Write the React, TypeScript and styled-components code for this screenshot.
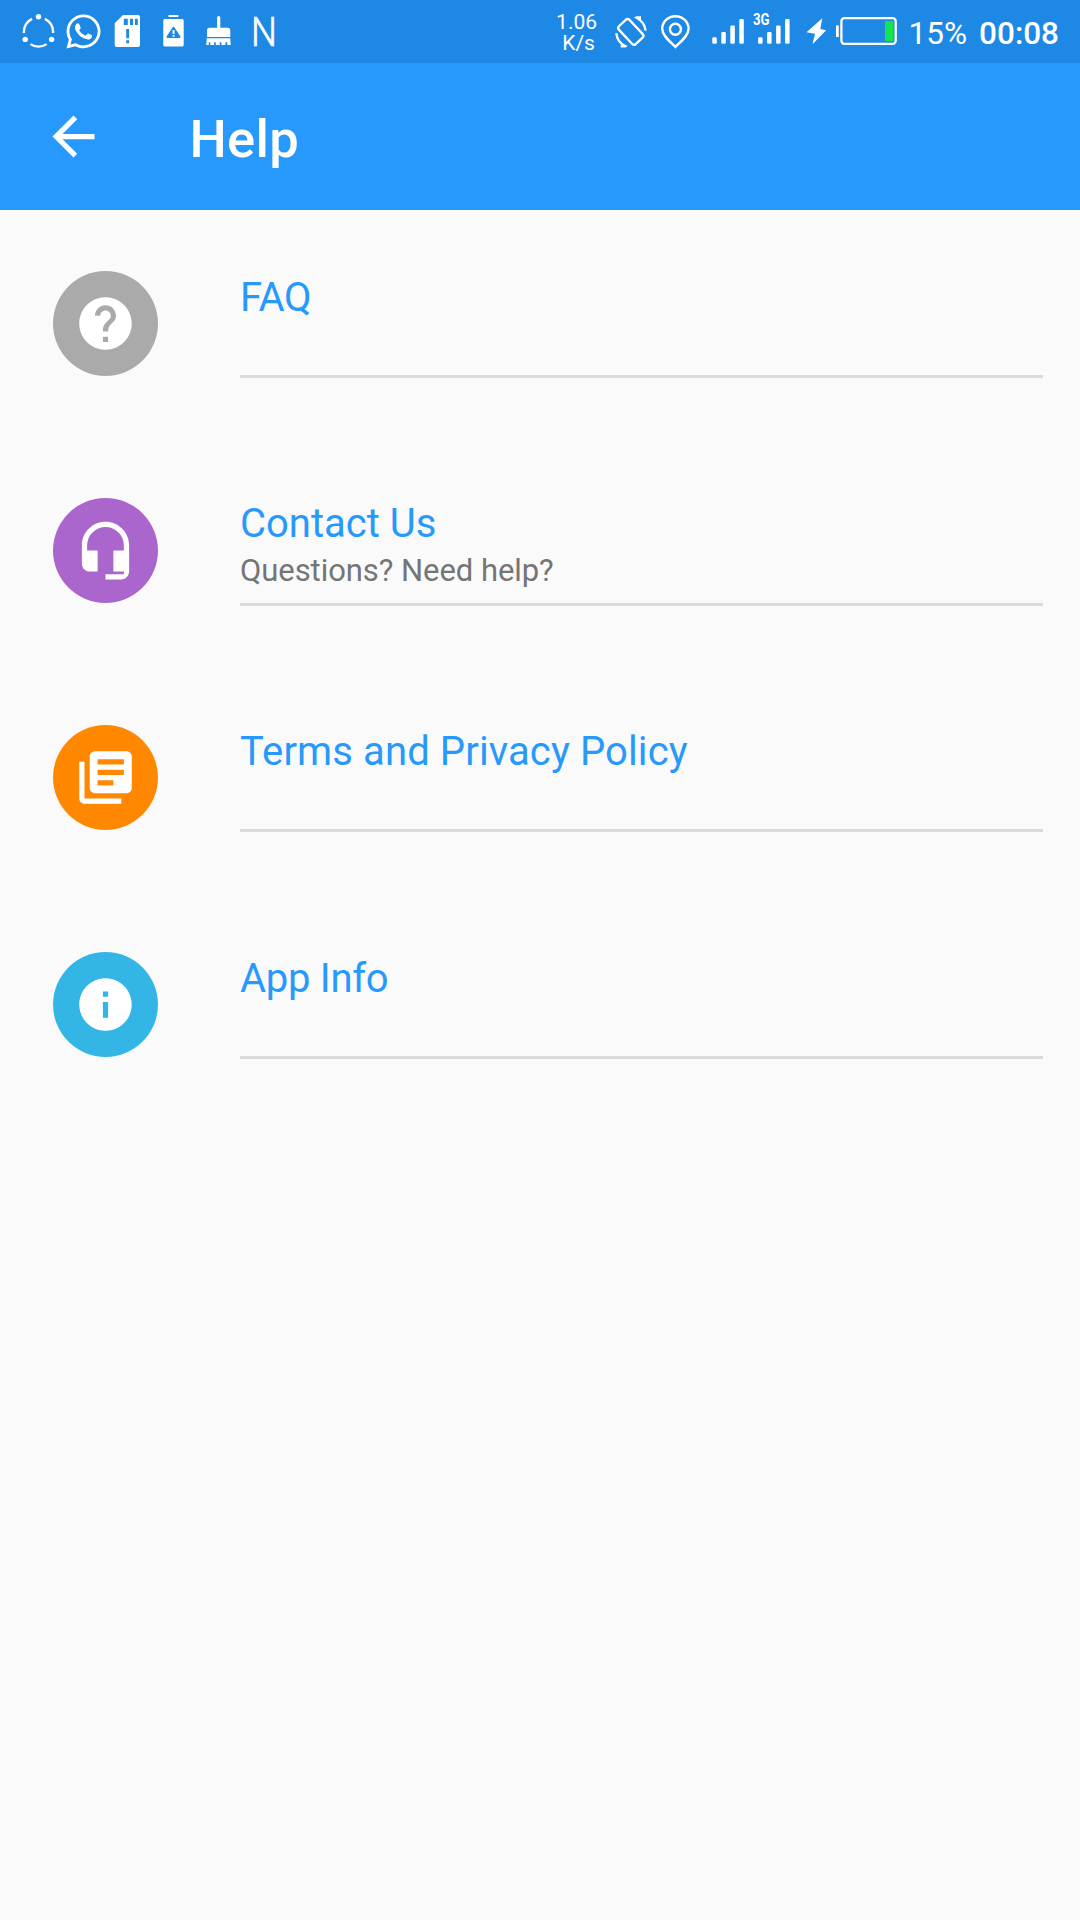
import React from 'react';
import styled, { createGlobalStyle } from 'styled-components';
import { FaWhatsapp } from 'react-icons/fa';

const GlobalStyle = createGlobalStyle`
  * { box-sizing: border-box; }
  body { margin: 0; background: #fafafa; font-family: Roboto, "Liberation Sans", sans-serif; }
`;

const Screen = styled.div`
  width: 1080px;
  height: 1920px;
  display: flex;
  flex-direction: column;
  background: #fafafa;
  overflow: hidden;
`;

const StatusBar = styled.div`
  height: 63px;
  flex: none;
  display: flex;
  justify-content: space-between;
  padding: 0 21px 0 16px;
  background: #1e88e5;
  color: #fff;
`;

const StatusGroup = styled.div`
  display: flex;
  align-items: center;
`;

const Slot = styled.div<{ $width?: number }>`
  width: ${(p) => p.$width ?? 45}px;
  height: 63px;
  display: flex;
  align-items: center;
  justify-content: center;
  position: relative;
  flex: none;
`;

const Glyph = styled.svg`
  display: block;
  width: 100%;
  height: 63px;
  fill: #fff;
`;

const AppLetter = styled.span`
  font-size: 41px;
  font-weight: 300;
  line-height: 63px;
  -webkit-text-stroke: 0.6px #fff;
  transform: translate(0.5px, 1px) scaleX(0.89);
`;

const Speed = styled.div`
  display: flex;
  flex-direction: column;
  align-items: center;
  width: 52px;
  margin-right: 6px;
  padding-top: 2px;
  font-size: 21px;
  line-height: 21px;
  flex: none;
`;

const SpeedUnit = styled.span`
  padding-left: 4px;
`;

const NetworkBadge = styled.span`
  position: absolute;
  left: 3.5px;
  top: 12px;
  font-size: 16.5px;
  font-weight: 700;
  line-height: 16px;
  transform: scaleX(0.8);
  transform-origin: left;
`;

const Percent = styled.span`
  margin-left: 10px;
  padding-top: 3px;
  font-size: 31.5px;
  line-height: 37px;
`;

const Clock = styled(Percent)`
  margin-left: 12px;
  font-weight: 500;
`;

const AppBar = styled.header`
  height: 147px;
  flex: none;
  display: flex;
  align-items: center;
  padding-left: 42px;
  background: #2899fc;
  color: #fff;
`;

const BackButton = styled.button`
  width: 63px;
  height: 63px;
  padding: 0;
  border: 0;
  background: none;
`;

const Title = styled.h1`
  margin: 4px 0 0 84.5px;
  font-size: 52.5px;
  line-height: 62px;
  letter-spacing: 0.3px;
  font-weight: 500;
`;

const List = styled.main`
  display: flex;
  flex-direction: column;
  gap: 119px;
  padding: 61px 37px 0 53px;
`;

const Row = styled.section`
  height: 108px;
  display: flex;
  gap: 82px;
`;

const Avatar = styled.div<{ $color: string }>`
  width: 105px;
  height: 105px;
  flex: none;
  display: flex;
  align-items: center;
  justify-content: center;
  border-radius: 50%;
  background: ${(p) => p.$color};
`;

const MaterialIcon = styled.svg`
  display: block;
  width: 63px;
  height: 63px;
  fill: #fff;
`;

const RowBody = styled.div<{ $drop: number }>`
  flex: 1;
  height: ${(p) => 107 + p.$drop}px;
  padding-top: ${(p) => 3 - p.$drop}px;
  border-bottom: 3px solid #dbdbdb;
`;

const RowTitle = styled.div<{ $tracking: number }>`
  font-size: 40px;
  line-height: 48px;
  letter-spacing: ${(p) => p.$tracking}px;
  color: #2899fc;
  white-space: nowrap;
`;

const RowNote = styled.div`
  padding-top: 1px;
  font-size: 31px;
  line-height: 44px;
  letter-spacing: -0.06px;
  color: #757575;
`;

const BARS = [
  { x: 7.3, y: 37.3 },
  { x: 16.3, y: 32 },
  { x: 25.3, y: 25.5 },
  { x: 34.3, y: 19 },
];

function SignalBars({ shift = 0 }: { shift?: number }) {
  return (
    <Glyph viewBox="0 0 45 63">
      {BARS.map((b) => (
        <rect key={b.x} x={b.x + shift} y={b.y} width={4.5} height={43.8 - b.y} rx={1.2} />
      ))}
    </Glyph>
  );
}

const ROWS = [
  {
    title: 'FAQ',
    note: '',
    color: '#aaaaaa',
    drop: 0,
    tracking: -0.3,
    path: 'M12 2C6.48 2 2 6.48 2 12s4.48 10 10 10 10-4.48 10-10S17.52 2 12 2zm1 17h-2v-2h2v2zm2.07-7.75l-.9.92C13.45 12.9 13 13.5 13 15h-2v-.5c0-1.1.45-2.1 1.17-2.83l1.24-1.26c.37-.36.59-.86.59-1.41 0-1.1-.9-2-2-2s-2 .9-2 2H8c0-2.21 1.79-4 4-4s4 1.79 4 4c0 .88-.36 1.68-.93 2.25z',
  },
  {
    title: 'Contact Us',
    note: 'Questions? Need help?',
    color: '#aa66cc',
    drop: 1,
    tracking: 0,
    path: 'M12 1c-4.97 0-9 4.03-9 9v7c0 1.66 1.34 3 3 3h3v-8H5v-2c0-3.87 3.13-7 7-7s7 3.13 7 7v2h-4v8h4v1h-7v2h6c1.66 0 3-1.34 3-3V10c0-4.97-4.03-9-9-9z',
  },
  {
    title: 'Terms and Privacy Policy',
    note: '',
    color: '#ff8800',
    drop: 0,
    tracking: 0.12,
    path: 'M4 6H2v14c0 1.1.9 2 2 2h14v-2H4V6zm16-4H8c-1.1 0-2 .9-2 2v12c0 1.1.9 2 2 2h12c1.1 0 2-.9 2-2V4c0-1.1-.9-2-2-2zm-1 9H9V9h10v2zm-4 4H9v-2h6v2zm4-8H9V5h10v2z',
  },
  {
    title: 'App Info',
    note: '',
    color: '#33b5e5',
    drop: 0,
    tracking: -0.28,
    path: 'M12 2C6.48 2 2 6.48 2 12s4.48 10 10 10 10-4.48 10-10S17.52 2 12 2zm1 15h-2v-6h2v6zm0-8h-2V7h2v2z',
  },
];

export default function App() {
  return (
    <Screen>
      <GlobalStyle />
      <StatusBar>
        <StatusGroup>
          <Slot>
            <Glyph viewBox="16 0 45 63">
              <circle cx="38.5" cy="32" r="14.6" fill="none" stroke="#fff" strokeWidth="2.4" pathLength="360" strokeDasharray="68 52" strokeDashoffset="-296" />
              <circle cx="38.5" cy="16.8" r="2.7" />
              <circle cx="25.2" cy="39.4" r="2.7" />
              <circle cx="51.6" cy="39.4" r="2.7" />
            </Glyph>
          </Slot>
          <Slot>
            <FaWhatsapp size={39} />
          </Slot>
          <Slot>
            <Glyph viewBox="106 0 45 63">
              <path
                fillRule="evenodd"
                d="M123 15h15a2 2 0 0 1 2 2v28a2 2 0 0 1-2 2h-21.300a2 2 0 0 1-2-2V23.300zM123.800 18.800v6.300h4v-6.300zM130 18.800v6.300h3v-6.300zM135 18.800v6.300h2.800v-6.300zM126.200 29v9.300h2.900V29zM126.200 40.300v3h2.900v-3z"
              />
            </Glyph>
          </Slot>
          <Slot>
            <Glyph viewBox="151 0 45 63">
              <rect x="168.300" y="15" width="10.300" height="2" rx="0.800" />
              <path fillRule="evenodd" d="M164.800 19h17.400a1.500 1.500 0 0 1 1.500 1.500v24.400a1.500 1.500 0 0 1-1.500 1.500h-17.400a1.500 1.500 0 0 1-1.500-1.500V20.500a1.500 1.500 0 0 1 1.500-1.500zM172.600 27.300l-6 9.300q-.6 1.300.8 1.300h12.200q1.400 0 .8-1.300l-6-9.300q-.9-1.200-1.800 0z" />
              <rect x="172.600" y="30" width="1.900" height="4" />
              <rect x="172.600" y="35" width="1.900" height="1.700" />
            </Glyph>
          </Slot>
          <Slot>
            <Glyph viewBox="196 0 45 63">
              <path d="M217.100 17.500a1.600 1.600 0 0 1 3.200 0V27.800h7.400q2.600 0 2.600 2.600V37h-23.300v-6.600q0-2.600 2.600-2.600h7.500zM206.800 38.200h23.400l.6 6.800h-3.600v-2.700h-1.800V45h-4v-2.700h-1.700V45h-3.900v-2.700h-1.700V45h-3.800v-2.700h-1.500V45h-2.600z" />
            </Glyph>
          </Slot>
          <Slot>
            <AppLetter>N</AppLetter>
          </Slot>
        </StatusGroup>
        <StatusGroup>
          <Speed>
            <span>1.06</span>
            <SpeedUnit>K/s</SpeedUnit>
          </Speed>
          <Slot>
            <Glyph viewBox="609 0 45 63">
              <g fill="none" stroke="#fff" strokeWidth="2.300">
                <rect x="618.600" y="24.700" width="24.400" height="14.400" rx="2.400" transform="rotate(47 630.800 31.900)" />
                <path d="M637 18Q644.500 22 645.600 30.700" />
                <path d="M624.700 45.800Q617.200 42 616.300 33.200" />
              </g>
              <path d="M633.800 17.800L636.400 16.200H641V19H637zM627.900 46L625.300 47.600H620.700V44.800H624.700z" />
            </Glyph>
          </Slot>
          <Slot>
            <Glyph viewBox="654 0 45 63">
              <g fill="none" stroke="#fff" strokeWidth="2.400">
                <path d="M675.400 47C670 41.500 662.200 35.500 662.200 28.800a13.200 12.600 0 0 1 26.400 0C688.600 35.500 680.800 41.500 675.400 47z" />
                <circle cx="675.400" cy="29.300" r="5.500" />
              </g>
            </Glyph>
          </Slot>
          <Slot $width={6} />
          <Slot>
            <SignalBars />
          </Slot>
          <Slot>
            <SignalBars shift={0.8} />
            <NetworkBadge>3G</NetworkBadge>
          </Slot>
          <Slot>
            <Glyph viewBox="795 0 45 63">
              <path d="M822.300 18.300L820.300 29L826.200 30.300L812.500 44.200L815 33.700L806.500 32.300z" />
              <rect x="836" y="25.300" width="2.800" height="11.700" rx="0.600" />
            </Glyph>
          </Slot>
          <Slot $width={59}>
            <Glyph viewBox="840 0 59 63">
              <rect x="841.400" y="18.200" width="54.300" height="25.600" rx="3" fill="none" stroke="#fff" strokeWidth="2.300" />
              <rect x="885" y="21" width="8.400" height="20.300" rx="0.800" fill="#14e350" />
            </Glyph>
          </Slot>
          <Percent>15%</Percent>
          <Clock>00:08</Clock>
        </StatusGroup>
      </StatusBar>
      <AppBar>
        <BackButton aria-label="Back">
          <MaterialIcon viewBox="0 0 24 24">
            <path d="M20 11H7.830l5.590-5.590L12 4l-8 8 8 8 1.410-1.410L7.830 13H20v-2z" />
          </MaterialIcon>
        </BackButton>
        <Title>Help</Title>
      </AppBar>
      <List>
        {ROWS.map((row) => (
          <Row key={row.title}>
            <Avatar $color={row.color}>
              <MaterialIcon viewBox="0 0 24 24">
                <path d={row.path} />
              </MaterialIcon>
            </Avatar>
            <RowBody $drop={row.drop}>
              <RowTitle $tracking={row.tracking}>{row.title}</RowTitle>
              {row.note && <RowNote>{row.note}</RowNote>}
            </RowBody>
          </Row>
        ))}
      </List>
    </Screen>
  );
}
